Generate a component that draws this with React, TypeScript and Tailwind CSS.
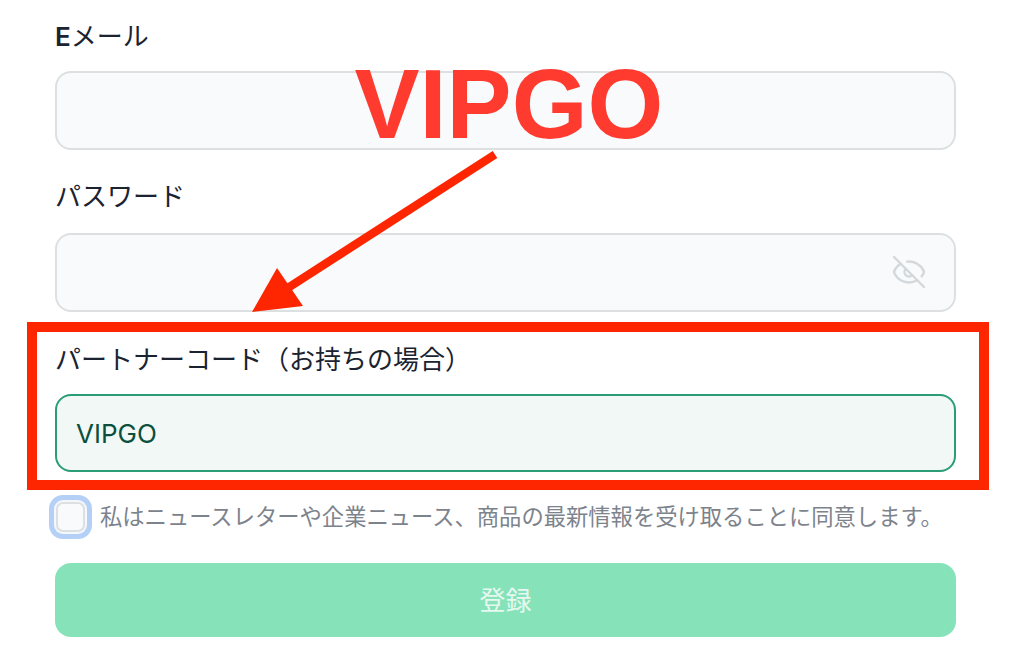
import { EyeOff } from "lucide-react";

const jp = "font-['Inter','Noto_Sans_CJK_JP',sans-serif]";
const labelCls = `block h-9 leading-9 text-[26px] text-[#1b2330] ${jp}`;
const inputCls = "block w-full rounded-2xl border-2 border-[#dde0e1] bg-[#f9fafb] outline-none";

export default function App() {
  return (
    <div className={`relative h-[664px] w-[1024px] overflow-hidden bg-white pl-[55px] pr-[68px] pt-[19px] ${jp}`}>
      <label className={`${labelCls} mb-[16px]`}>
        <span className="font-semibold">E</span>メール
      </label>
      <input readOnly className={`${inputCls} h-[79px]`} />

      <label className={`${labelCls} mt-[29px] mb-[18px]`}>パスワード</label>
      <div className="relative">
        <input readOnly className={`${inputCls} h-[79px]`} />
        <EyeOff className="absolute right-[29px] top-[21px] h-[36px] w-[36px] text-[#d3d8dc]" strokeWidth={1.6} />
      </div>

      <div className="-ml-[28px] -mr-[33px] mt-[10px] border-[10px] border-[#fd2600] pl-[18px] pr-[23px] pt-[10px] pb-[8px]">
        <label className={`${labelCls} mb-[16px] whitespace-nowrap`}>パートナーコード（お持ちの場合）</label>
        <input
          readOnly
          value="VIPGO"
          className="block h-[78px] w-full rounded-2xl border-2 border-[#2a9d78] bg-[#f1f8f6] px-[19px] text-[26px] text-[#0b4f3c] outline-none"
        />
      </div>

      <div className="mt-[12px] flex items-center">
        <span className="ml-px h-[30px] w-[29px] shrink-0 rounded-[7px] border-2 border-[#dde0e1] bg-[#f9fafb] shadow-[0_0_0_2px_#f4f7fd,0_0_0_7px_#b4d0f7]" />
        <span className="ml-[15px] whitespace-nowrap text-[22.3px] leading-[30px] text-[#7d838c]">
          私はニュースレターや企業ニュース、商品の最新情報を受け取ることに同意します。
        </span>
      </div>

      <button className="mt-[31px] flex h-[74px] w-full items-center justify-center rounded-2xl bg-[#86e3b9] text-[26px] text-[#e6f8ef]">
        登録
      </button>

      <span className="absolute left-[354.5px] top-[49px] font-['Liberation_Sans',sans-serif] text-[97.5px] font-bold leading-[112px] text-[#ff3b30]">
        VIPGO
      </span>
      <svg className="absolute left-0 top-0" width="1024" height="664" viewBox="0 0 1024 664" fill="none">
        <line x1="495" y1="154.5" x2="280" y2="293" stroke="#fd2600" strokeWidth="8.5" />
        <polygon points="252,312 277,268 303,306" fill="#fd2600" />
      </svg>
    </div>
  );
}
